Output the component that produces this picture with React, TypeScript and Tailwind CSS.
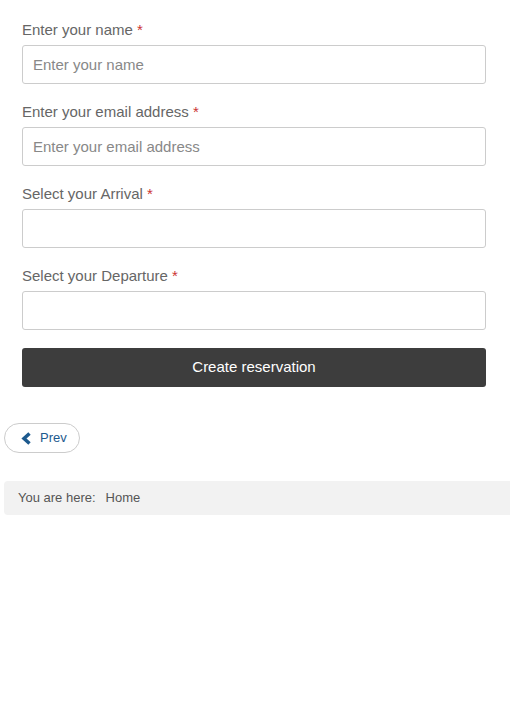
import React from "react";

function Field({ label, placeholder }: { label: string; placeholder?: string }) {
  return (
    <div className="mb-[18px]">
      <label className="block h-[20px] text-[15px] leading-[20px] text-[#666] mb-[5px]">
        {label} <span className="text-[#c33]">*</span>
      </label>
      <input
        type="text"
        placeholder={placeholder}
        className="block w-full h-[39px] border border-[#ccc] rounded-[3px] px-[10px] text-[15px] text-[#555] placeholder:text-[#888] bg-white outline-none"
      />
    </div>
  );
}

export default function App() {
  return (
    <div className="w-[510px] min-h-[706px] bg-white" style={{ fontFamily: '"Liberation Sans", Arial, sans-serif' }}>
      <div className="pt-[20px] pl-[22px] w-[486px]">
        <Field label="Enter your name" placeholder="Enter your name" />
        <Field label="Enter your email address" placeholder="Enter your email address" />
        <Field label="Select your Arrival" />
        <Field label="Select your Departure" />
        <button className="block w-full h-[39px] bg-[#3d3d3d] text-white text-[15px] rounded-[3px]">
          Create reservation
        </button>
      </div>
      <div className="pl-[4px] mt-[36px]">
        <button className="flex items-center gap-[8px] h-[30px] w-[76px] pl-[16px] border border-[#ccc] rounded-full text-[13px] text-[#1d5a8e] bg-white">
          <svg width="11" height="13" viewBox="0 0 11 13">
            <path d="M8.5 1.5 L3 6.5 L8.5 11.5" fill="none" stroke="#1d5a8e" strokeWidth="3.5" strokeLinejoin="miter" />
          </svg>
          Prev
        </button>
      </div>
      <div className="ml-[4px] mt-[28px] h-[34px] bg-[#f2f2f2] rounded-l-[4px] flex items-center pl-[14px] text-[13px] text-[#555]">
        <span>You are here:</span>
        <span className="ml-[10px]">Home</span>
      </div>
    </div>
  );
}
